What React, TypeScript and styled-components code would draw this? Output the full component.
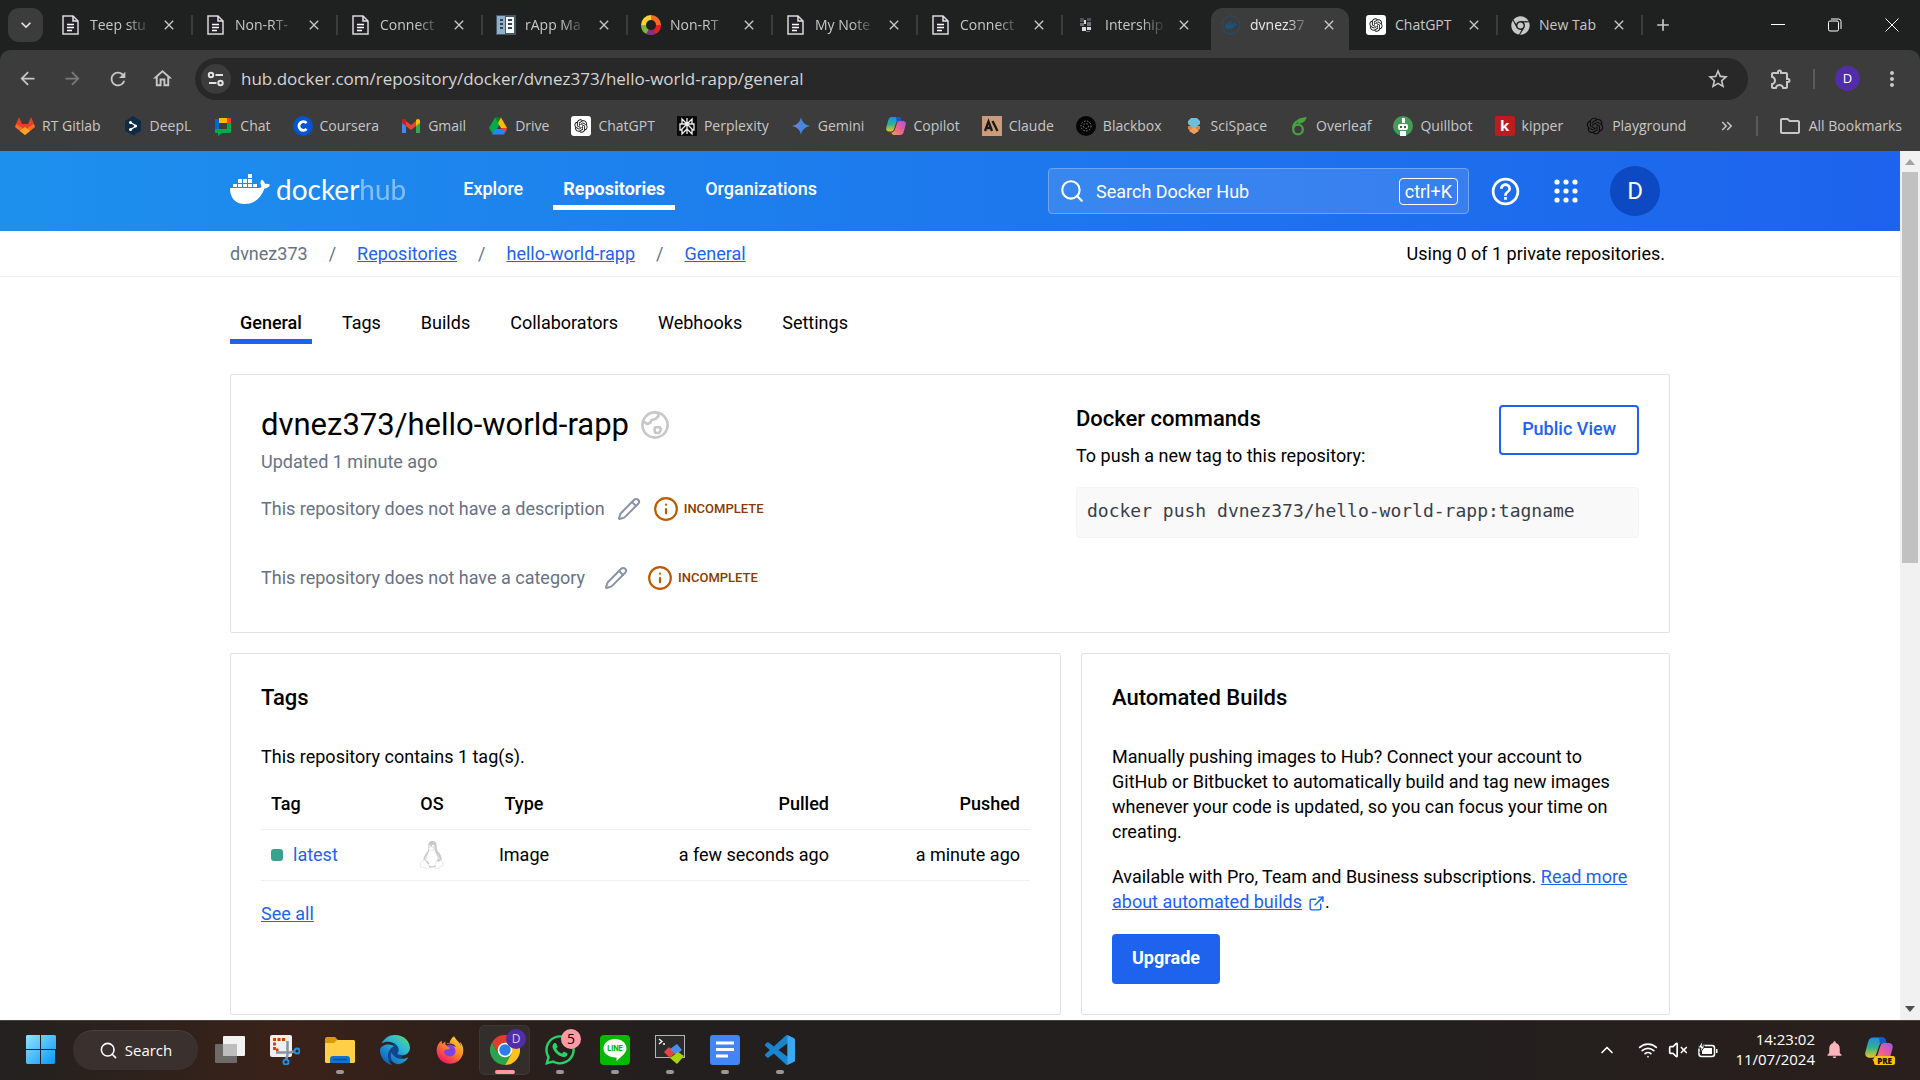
import React from "react";
import styled, { createGlobalStyle, css } from "styled-components";
import {
  MdArrowBack, MdArrowForward, MdRefresh, MdOutlineHome, MdStarBorder, MdMoreVert,
  MdOutlineFolder, MdOutlineExtension, MdAdd, MdClose, MdExpandMore, MdHelpOutline,
  MdKeyboardDoubleArrowRight, MdNotifications,
} from "react-icons/md";
import { FaLinux, FaWhatsapp, FaChrome, FaDocker } from "react-icons/fa";
import { FaEdge, FaFirefoxBrowser } from "react-icons/fa6";
import { RiOpenaiFill } from "react-icons/ri";
import { Info, Pencil, Search, ExternalLink, Wifi, VolumeX, ChevronUp } from "lucide-react";

const ui = `"Open Sans", "Noto Sans", sans-serif`;
const blue = "#1d63ed";

const Global = createGlobalStyle`
  *, *::before, *::after { box-sizing: border-box; }
  html, body { margin: 0; height: 100%; }
  body { font-family: Roboto, "Liberation Sans", sans-serif; font-size: 18px; line-height: 25px; color: #000; }
  #root { height: 100%; }
  button, input { font: inherit; color: inherit; border: 0; padding: 0; margin: 0; background: none; }
  button { cursor: pointer; }
  h1, h2, p { margin: 0; }
  a { color: ${blue}; }
  svg { display: block; flex: none; }
`;

const Screen = styled.div`
  display: grid;
  grid-template-rows: auto minmax(0, 1fr) auto;
  height: 100vh;
  overflow: hidden;
  background: #fff;
`;

/* ---------- browser frame ---------- */

const Chrome = styled.header`
  background: #1f2120;
  color: #c7c7c7;
  font-family: ${ui};
  font-size: 14px;
  line-height: 20px;
`;

const TabStrip = styled.div`
  display: flex;
  align-items: center;
  height: 50px;
  padding-left: 8px;
`;

const TabSearch = styled.button`
  display: grid;
  place-items: center;
  width: 35px;
  height: 34px;
  margin-right: 5px;
  border-radius: 11px;
  background: #3c3c3c;
  color: #e3e3e3;
`;

const Tab = styled.div<{ $active?: boolean; $bare?: boolean }>`
  position: relative;
  display: flex;
  align-items: center;
  flex: 0 1 145px;
  min-width: 0;
  height: 50px;
  padding: 0 6px 0 13px;
  isolation: isolate;
  ${p => !p.$bare && !p.$active && css`
    &::after {
      content: "";
      position: absolute;
      right: 0;
      top: 15px;
      width: 2px;
      height: 20px;
      background: #3c3c3c;
    }
  `}
  ${p => p.$active && css`
    color: #e8e8e8;
    &::before {
      content: "";
      position: absolute;
      z-index: -1;
      inset: 8px 4px 0 3px;
      border-radius: 12px 12px 0 0;
      background: #3c3c3c;
    }
  `}
`;

const TabTitle = styled.button`
  display: flex;
  align-items: center;
  flex: 1;
  gap: 9px;
  min-width: 0;
  text-align: left;
`;

const Fade = styled.span<{ $whole?: boolean }>`
  flex: 1;
  min-width: 0;
  overflow: hidden;
  white-space: nowrap;
  ${p => !p.$whole && "mask-image: linear-gradient(90deg, #000 60%, transparent);"}
`;

const IconButton = styled.button<{ $w?: number; $dim?: boolean }>`
  display: grid;
  place-items: center;
  flex: none;
  width: ${p => p.$w ?? 45}px;
  height: 40px;
  color: ${p => (p.$dim ? "#7a7a7a" : "#c7c7c7")};
`;

const WindowControls = styled.div`
  display: flex;
  margin-left: auto;
  color: #fff;
`;

const Toolbar = styled.div`
  display: flex;
  align-items: center;
  height: 51px;
  padding: 7px 6px 1px 5px;
  border-radius: 10px 10px 0 0;
  background: #3c3c3c;
`;

const Omnibox = styled.div`
  display: flex;
  align-items: center;
  flex: 1;
  height: 42px;
  margin: 0 10px;
  padding: 0 8px 0 6px;
  border-radius: 21px;
  background: #282828;
`;

const SiteInfo = styled.button`
  display: grid;
  place-items: center;
  width: 30px;
  height: 30px;
  margin-right: 10px;
  border-radius: 50%;
  background: #3c3c3c;
`;

const Url = styled.input`
  flex: 1;
  min-width: 0;
  height: 30px;
  font-size: 17px;
  color: #d4d4d4;
  outline: 0;
`;

const Divider = styled.span`
  width: 2px;
  height: 20px;
  background: #5a5a5a;
`;

const Account = styled.div`
  display: flex;
  align-items: center;
  gap: 20px;
  padding: 0 9px 0 10px;
`;

const Profile = styled.button`
  width: 25px;
  height: 25px;
  border-radius: 50%;
  background: #512da8;
  color: #fff;
  font-size: 13px;
  line-height: 25px;
`;

const Bookmarks = styled.nav`
  display: flex;
  align-items: center;
  height: 50px;
  padding: 0 18px 0 15px;
  background: #3c3c3c;
`;

const BookmarkList = styled.div`
  display: flex;
  gap: 22px;
`;

const Bookmark = styled.a`
  display: flex;
  align-items: center;
  gap: 7px;
  color: #c7c7c7;
  text-decoration: none;
  white-space: nowrap;
`;

const BookmarkTail = styled.div`
  display: flex;
  align-items: center;
  gap: 20px;
  margin-left: auto;
`;

/* ---------- page ---------- */

const Viewport = styled.div`
  display: flex;
  min-height: 0;
`;

const Page = styled.div`
  flex: 1;
  min-width: 0;
  overflow: hidden;
`;

const Container = styled.div`
  max-width: 1440px;
  margin: 0 auto;
`;

const HubHeader = styled.header`
  background: linear-gradient(90deg, #1d90ed, #1d63ed);
  color: #fff;
`;

const HubBar = styled(Container)`
  display: flex;
  align-items: center;
  height: 80px;
`;

const Logo = styled.a`
  display: flex;
  align-items: center;
  gap: 6px;
  margin-right: 47px;
  padding-bottom: 4px;
  color: #fff;
  font-family: Lato, sans-serif;
  font-size: 28px;
  line-height: 30px;
  text-decoration: none;
  span { opacity: 0.45; }
`;

const TabNav = styled.nav`
  display: flex;
  gap: 20px;
`;

const HubNav = styled(TabNav)`
  padding-bottom: 4px;
`;

const NavLink = styled.a<{ $active?: boolean; $light?: boolean }>`
  padding: 8px 10px 4px;
  border-bottom: 5px solid transparent;
  color: ${p => (p.$light ? "#fff" : "#000")};
  font-weight: ${p => (p.$active ? (p.$light ? 700 : 500) : p.$light ? 500 : 400)};
  text-decoration: none;
  ${p => p.$active && `border-color: ${p.$light ? "#fff" : blue};`}
`;

const SearchBox = styled.label`
  display: flex;
  align-items: center;
  gap: 11px;
  flex: 0 1 421px;
  height: 46px;
  margin-left: auto;
  padding: 0 10px;
  border: 1px solid #6fa5f5;
  border-radius: 4px;
  background: rgba(255, 255, 255, 0.12);
  input { flex: 1; min-width: 0; outline: 0; }
  input::placeholder { color: #fff; opacity: 1; }
  kbd {
    padding: 0 5px;
    border: 1px solid #fff;
    border-radius: 4px;
    font: inherit;
  }
`;

const HubActions = styled.div`
  display: flex;
  align-items: center;
  gap: 32px;
  margin: 0 10px 0 20px;
`;

const Avatar = styled.button`
  width: 50px;
  height: 50px;
  border-radius: 50%;
  background: #0c49c2;
  font-size: 24px;
`;

const Crumbs = styled.div`
  border-bottom: 1px solid #efeff2;
`;

const CrumbRow = styled(Container)`
  display: flex;
  justify-content: space-between;
  padding: 10px 5px 10px 0;
`;

const CrumbList = styled.nav`
  display: flex;
  gap: 21px;
  color: #677285;
`;

const Content = styled(Container).attrs({ as: "main" })`
  padding-top: 25px;
`;

const Grid = styled.div`
  display: grid;
  grid-template-columns: minmax(0, 831fr) minmax(0, 589fr);
  gap: 20px;
  margin-top: 30px;
`;

const Card = styled.section<{ $wide?: boolean }>`
  border: 1px solid #e1e2e6;
  border-radius: 2px;
  padding: 30px;
  ${p => p.$wide && css`
    grid-column: 1 / -1;
    display: flex;
    justify-content: space-between;
    padding-bottom: 20px;
  `}
`;

const Title = styled.h1`
  display: flex;
  align-items: center;
  gap: 12px;
  font-size: 31px;
  font-weight: 400;
  line-height: 40px;
`;

const Heading = styled.h2`
  font-size: 22px;
  font-weight: 500;
  line-height: 28px;
`;

const Muted = styled.p`
  padding-top: 4px;
  color: #677285;
`;

const Missing = styled.div<{ $gap: number }>`
  display: flex;
  align-items: center;
  gap: ${p => p.$gap}px;
  height: 69px;
  color: #677285;
`;

const EditButton = styled.button`
  color: #8b93a7;
`;

const Badge = styled.span`
  display: flex;
  align-items: center;
  gap: 5px;
  color: #8a3a00;
  font-size: 13px;
  font-weight: 500;
  svg { color: #c05a00; }
`;

const Commands = styled.div`
  flex: 0 1 563px;
`;

const CommandHead = styled.div`
  display: flex;
  align-items: flex-start;
  justify-content: space-between;
  p { margin-top: 10px; }
`;

const Button = styled.button<{ $solid?: boolean }>`
  height: 50px;
  padding: 0 ${p => (p.$solid ? 18 : 21)}px 3px;
  border: 2px solid ${blue};
  border-radius: 4px;
  background: ${p => (p.$solid ? blue : "#fff")};
  color: ${p => (p.$solid ? "#fff" : blue)};
  font-weight: ${p => (p.$solid ? 700 : 500)};
`;

const Code = styled.code`
  display: block;
  margin-top: 19px;
  padding: 10px 10px 14px;
  border: 1px solid #f3f4f4;
  border-radius: 4px;
  background: #f9f9fa;
  color: #393f49;
  font: 18px/25px "DejaVu Sans Mono", "Liberation Mono", monospace;
  white-space: nowrap;
`;

const CardBody = styled.div`
  padding-top: 32px;
  p + p { margin-top: 20px; }
  ${Button} { margin-top: 20px; }
`;

const TagTable = styled.table`
  width: 100%;
  margin: 9px 0 20px;
  border-collapse: collapse;
  table-layout: fixed;
  th, td {
    height: 51px;
    padding: 0 10px;
    border-bottom: 1px solid #efeff2;
    font-weight: 400;
    text-align: right;
  }
  th { font-weight: 500; }
  th:nth-child(1), td:nth-child(1) { width: 138px; text-align: left; }
  th:nth-child(2), td:nth-child(2) { width: 66px; text-align: center; }
  th:nth-child(3), td:nth-child(3) { width: 118px; text-align: center; }
  th:nth-child(5) { width: 191px; }
  td svg { margin: 0 auto; }
`;

const TagName = styled.a`
  display: flex;
  align-items: center;
  gap: 10px;
  text-decoration: none;
  &::before {
    content: "";
    width: 12px;
    height: 12px;
    border-radius: 3px;
    background: #3aa18e;
  }
`;

const ReadMore = styled.a`
  svg { display: inline-block; vertical-align: -4px; margin-left: 6px; }
`;

const Scrollbar = styled.div`
  display: flex;
  flex-direction: column;
  align-items: center;
  width: 20px;
  background: #f1f1f1;
  svg { margin: 7px 0; }
`;

const Thumb = styled.div`
  width: 16px;
  height: 45%;
  margin-bottom: auto;
  background: #c1c1c1;
`;

/* ---------- taskbar ---------- */

const Taskbar = styled.footer`
  display: flex;
  align-items: center;
  height: 60px;
  padding: 0 25px 2px 26px;
  border-top: 1px solid #44413f;
  background: linear-gradient(90deg, #23211f, #3a2219 15%, #2c1f1b 26%, #231f1e 34%, #231f1e 75%, #2a1f1c);
  color: #fff;
  font-family: ${ui};
  font-size: 15px;
  line-height: 20px;
`;

const TaskSearch = styled.button`
  display: flex;
  align-items: center;
  justify-content: center;
  gap: 7px;
  width: 125px;
  height: 40px;
  margin: 0 6px 0 17px;
  border-radius: 20px;
  background: #3a302d;
  border-top: 1px solid #4a403d;
`;

const Task = styled.button<{ $open?: boolean; $focus?: boolean }>`
  position: relative;
  display: grid;
  place-items: center;
  width: 51px;
  height: 50px;
  margin-right: 4px;
  border-radius: 6px;
  ${p => p.$focus && "background: #332d2c; box-shadow: inset 0 0 0 1px #3d3736;"}
  ${p => p.$open && css`
    &::after {
      content: "";
      position: absolute;
      bottom: 1px;
      width: ${p.$focus ? 20 : 8}px;
      height: 4px;
      border-radius: 2px;
      background: ${p.$focus ? "#ff99a4" : "#9b9796"};
    }
  `}
`;

const Count = styled.span<{ $purple?: boolean }>`
  position: absolute;
  top: 4px;
  right: 4px;
  width: 20px;
  height: 20px;
  border-radius: 50%;
  background: ${p => (p.$purple ? "#512da8" : "#ff99a4")};
  color: ${p => (p.$purple ? "#d9cdf5" : "#000")};
  font-size: ${p => (p.$purple ? 12 : 14)}px;
`;

const Tray = styled.div`
  display: flex;
  align-items: center;
  gap: 9px;
  margin-left: auto;
`;

const TrayGroup = styled.button`
  display: flex;
  align-items: center;
  gap: 10px;
  margin: 0 8px 0 12px;
`;

const Clock = styled.time`
  padding-bottom: 2px;
  text-align: right;
`;

/* ---------- drawings ---------- */

type S = { s?: number };

const DocIcon = () => (
  <svg width="20" height="20" viewBox="0 0 20 20">
    <path d="M2 1h10l5 5v13H2z" fill="#232127" stroke="#d8d8d8" strokeWidth="1.5" />
    <path d="M12 1v5h5" fill="none" stroke="#e8e8e8" strokeWidth="1.5" />
    <path d="M6 9.500h7M6 12.500h7M6 15.500h5" stroke="#fff" strokeWidth="1.7" />
  </svg>
);
const PanelsIcon = () => (
  <svg width="20" height="20" viewBox="0 0 20 20">
    <path fill="#45596b" d="M0 0h20v20H0z" /><path fill="#8fb0c6" d="M1 1h8v18H1z" /><path fill="#f4f6f8" d="M10 2h8v16h-8z" />
    <path d="M4 5h3M4 9h3M4 13h3M12 5h4M12 9h4M12 13h4" stroke="#33424f" strokeWidth="2" />
  </svg>
);
const RingIcon = () => (
  <svg width="20" height="20" viewBox="0 0 20 20" fill="none" strokeWidth="5">
    <path d="M10 2.500A7.500 7.500 0 0 0 2.500 10" stroke="#fbd32c" /><path d="M10 2.500A7.500 7.500 0 0 1 17.500 10" stroke="#f36c21" />
    <path d="M17.500 10A7.500 7.500 0 0 1 13 17" stroke="#e3202a" /><path d="M13 17a7.500 7.500 0 0 1-6.500-.2" stroke="#8a2c8e" />
    <path d="M6.500 16.800A7.500 7.500 0 0 1 2.500 10" stroke="#7fb538" />
  </svg>
);
const PixelIcon = () => (
  <svg width="20" height="20" viewBox="0 0 20 20">
    <path fill="#4b4f58" d="M4 3h4v4H4zM11 3h4v3h-4z" /><path fill="#ddd" d="M8 5h2v4H8zM6 12h4v4H6zM11 12h4v3h-4z" />
    <path fill="#6d7077" d="M4 8h4v3H4zM11 7h4v4h-4zM10 16h4v1h-4z" />
  </svg>
);
const DockerFav = () => (
  <svg width="20" height="20" viewBox="0 0 20 20">
    <circle cx="10" cy="10" r="9" fill="none" stroke="#1d567d" strokeWidth="1" strokeDasharray="3 1" />
    <FaDocker x="4" y="4" size={12} color="#17557f" />
  </svg>
);
const OpenAI = () => (
  <svg width="20" height="20" viewBox="0 0 20 20"><rect width="20" height="20" rx="3" fill="#fff" /><RiOpenaiFill x="2" y="2" size={16} color="#111" /></svg>
);
const Gitlab = () => (
  <svg width="20" height="20" viewBox="0 0 20 20">
    <path fill="#fc6d26" d="M10 19 0 11l1-3h18l1 3z" /><path fill="#e24329" d="m1 8 3-7 3 7h6l3-7 3 7-5 3-4 3-4-3z" /><path fill="#fca326" d="m10 19-5-4 5-4 5 4z" />
  </svg>
);
const DeepL = () => (
  <svg width="20" height="20" viewBox="0 0 20 20">
    <path fill="#0f2b46" d="m10 0 8 5v10l-6 3v2l-4-2-6-3V5z" /><path d="m7 6 6 4-6 4" fill="none" stroke="#fff" strokeWidth="1.3" />
    <g fill="#fff"><circle cx="7.500" cy="6.500" r="1.500" /><circle cx="12.500" cy="10" r="1.500" /><circle cx="7.500" cy="13.500" r="1.500" /></g>
  </svg>
);
const Chat = () => (
  <svg width="20" height="20" viewBox="0 0 20 20">
    <path fill="#00ac47" d="M2 6h4v7h8V6h4v10a1 1 0 0 1-1 1H9l-4 3v-3H2z" /><path fill="#0066da" d="M2 3h4v10H2z" />
    <path fill="#ffba00" d="M6 2h9v5H6z" /><path fill="#ea4335" d="M14 2h3a1 1 0 0 1 1 1v4h-4z" /><path fill="#3c3c3c" d="M6 7h8v6H6z" />
  </svg>
);
const Coursera = () => (
  <svg width="20" height="20" viewBox="0 0 20 20"><circle cx="10" cy="10" r="10" fill="#0056d2" /><path d="M13.500 7.200a4.300 4.300 0 1 0 0 5.600" fill="none" stroke="#fff" strokeWidth="2.800" /></svg>
);
const Gmail = () => (
  <svg width="20" height="20" viewBox="0 0 20 20">
    <path fill="#4285f4" d="M1 6l4 3v8H1z" /><path fill="#34a853" d="M15 9l4-3v11h-4z" /><path fill="#ea4335" d="m5 5 5 4 5-4v5l-5 4-5-4z" />
    <path fill="#c5221f" d="M1 5c0-2 2-3 4-1v6L1 7z" /><path fill="#fbbc04" d="M19 5c0-2-2-3-4-1v6l4-3z" />
  </svg>
);
const Drive = () => (
  <svg width="20" height="20" viewBox="0 0 20 20">
    <path fill="#00ac47" d="M7 1.500h3L13 7 5 18 1 12z" /><path fill="#00832d" d="M7 1.500h6L10 7z" /><path fill="#ffba00" d="M13 1.500 19 12h-6L10 7z" />
    <path fill="#2684fc" d="M4 18.500 7 13h12l-3 5.500z" /><path fill="#ea4335" d="M13 12h6l-2 4.500z" />
  </svg>
);
const Perplexity = () => (
  <svg width="20" height="20" viewBox="0 0 20 20"><rect width="20" height="20" rx="1" fill="#0a0a0a" />
    <path d="M10 2v16M5 3l5 5 5-5v5H5zM5 8H3v6h2M15 8h2v6h-2M10 8l-5 5v5l5-5 5 5v-5z" fill="none" stroke="#eee" strokeWidth="1.300" /></svg>
);
const Gemini = () => (
  <svg width="20" height="20" viewBox="0 0 20 20">
    <defs><linearGradient id="gem" x1="0" x2="1"><stop stopColor="#8d7bd0" /><stop offset=".5" stopColor="#4b84e0" /><stop offset="1" stopColor="#2f9bd8" /></linearGradient></defs>
    <path fill="url(#gem)" d="M10 1c.8 5 4 8.200 9 9-5 .8-8.200 4-9 9-.8-5-4-8.200-9-9 5-.8 8.200-4 9-9z" />
  </svg>
);
const Copilot = ({ s = 20 }: S) => (
  <svg width={s} height={s} viewBox="0 0 20 20">
    <defs>
      <linearGradient id={`ca${s}`} x1="0" y1="0" x2="0" y2="1"><stop stopColor="#1b8fe8" /><stop offset=".5" stopColor="#2fb28e" /><stop offset="1" stopColor="#f2c51c" /></linearGradient>
      <linearGradient id={`cb${s}`} x1="1" y1="0" x2="0" y2="1"><stop stopColor="#a554e8" /><stop offset=".5" stopColor="#ee5f8f" /><stop offset="1" stopColor="#fb9a56" /></linearGradient>
    </defs>
    <path fill={`url(#ca${s})`} d="M6 1h6.500c1.300 0 2 1 2.300 2l.5 2h-2.500c-1.500 0-2.300.8-2.800 2.300L8 13c-.6 1.700-1.500 2.500-3 2.500H3C.8 15.500-.3 14 .3 11.500l2-7.500C2.900 2 4 1 6 1z" />
    <path fill="#1757c8" d="M10 1h2.500c1.300 0 2 1 2.300 2l.5 2h-2.500c-1 0-1.600.4-2.100 1z" />
    <path fill={`url(#cb${s})`} d="M14 19H8c-1.500 0-2.300-1-2.700-2.500C7 16.500 8.500 15 9 13.300L11 7c.5-1.300 1.200-2 2.500-2H17c2 0 3.200 1.500 2.700 3.500L17.700 16c-.6 2-1.700 3-3.700 3z" />
  </svg>
);
const Claude = () => (
  <svg width="20" height="20" viewBox="0 0 20 20"><path fill="#cc9b7a" d="M0 0h20v20H0z" /><path d="M3 15 6.500 5.500 10 15M4.500 12h4M10.500 5 15.500 15" fill="none" stroke="#1a1a18" strokeWidth="2.300" /></svg>
);
const Blackbox = () => (
  <svg width="20" height="20" viewBox="0 0 20 20"><circle cx="10" cy="10" r="10" fill="#050505" />
    <g fill="none" stroke="#888" strokeDasharray="1.500 1.500"><circle cx="10" cy="10" r="5" /><circle cx="10" cy="10" r="2.500" /></g></svg>
);
const SciSpace = () => (
  <svg width="20" height="20" viewBox="0 0 20 20"><path fill="#e2843e" d="m4 13 6 5 6-5v-3H4z" /><path fill="#f3a05f" d="m5 15 5 3 5-3-5-4z" /><path fill="#6cc0da" d="m4 5 3-3h6l3 3v3l-4 3v1H8v-1L4 8z" /></svg>
);
const Overleaf = () => (
  <svg width="20" height="20" viewBox="0 0 20 20" fill="none" stroke="#47a141" strokeWidth="2.300"><circle cx="9" cy="13.500" r="4.800" /><path d="M4.300 12C4 8 8 3.500 16 2.500c-1 2.500-4 4-7 4" /></svg>
);
const Quillbot = () => (
  <svg width="20" height="20" viewBox="0 0 20 20"><circle cx="10" cy="10" r="10" fill="#469a57" /><rect x="5" y="8" width="10" height="6" rx="2" fill="#fff" />
    <path fill="#fff" d="M7 15h6v5H7zM9 2h3v5H9z" /><path fill="#2c6e3c" d="M7 10h2v2H7zM11 10h2v2h-2z" /></svg>
);
const KipperMark = styled.span`
  width: 20px;
  height: 20px;
  border-radius: 2px;
  background: #b91d1d;
  color: #fff;
  font-weight: 700;
  font-size: 15px;
  line-height: 18px;
  text-align: center;
`;

const Tune = () => (
  <svg width="18" height="16" viewBox="0 0 18 16" fill="none" stroke="#e3e3e3" strokeWidth="2"><circle cx="4" cy="4" r="2.200" /><path d="M8.500 4H16M2 12h7.500" /><circle cx="13.500" cy="12" r="2.200" /></svg>
);
const Minimise = () => <svg width="14" height="14" viewBox="0 0 14 14"><path d="M0 6.500h14" stroke="#fff" /></svg>;
const Restore = () => (
  <svg width="14" height="14" viewBox="0 0 14 14" fill="none" stroke="#fff"><rect x=".5" y="3" width="10" height="10" rx="1.500" /><path d="M3 1h7.500a2.500 2.500 0 0 1 2.500 2.500V11" /></svg>
);
const Cross = () => <svg width="14" height="14" viewBox="0 0 14 14"><path d="m.5.5 13 13m0-13-13 13" stroke="#fff" /></svg>;

const Whale = () => (
  <svg width="40" height="30" viewBox="0 0 40 30" fill="#fff">
    <path d="M18 0h4v4h-4zM8 5h4v4H8zM13 5h4v4h-4zM18 5h4v4h-4zM3 10h4v3H3zM8 10h4v3H8zM13 10h4v3h-4zM18 10h4v3h-4zM23 10h4v3h-4z" />
    <path d="M0 14h29c2.500 0 3-1 2-3-1-2-.5-4 1-5.500 2 1.500 2.700 3 3 4.500 2-.5 3.500-.2 5 .8-1 2.700-3 3.700-5.500 3.700C31 24 24 30 15 30 5 30 0 24 0 14z" />
  </svg>
);
const Dots = () => (
  <svg width="24" height="24" viewBox="0 0 24 24" fill="#fff">{[3, 12, 21].map(y => [3, 12, 21].map(x => <circle key={`${x}-${y}`} cx={x} cy={y} r="2.600" />))}</svg>
);
const Globe = () => (
  <svg width="28" height="28" viewBox="0 0 28 28" fill="none" stroke="#c8c8c8" strokeWidth="2.600" strokeLinejoin="round">
    <circle cx="14" cy="14" r="12.600" /><path d="M2 10.500 6.500 13l3-1.500 1-2.500 4-1 3-3L17 2" /><path d="m14 16.500 4.500-.5 1.500 2.500-2 3.500h-3.500l-1-2.500z" />
  </svg>
);
const WindowsLogo = () => (
  <svg width="30" height="30" viewBox="0 0 30 30">
    <defs><linearGradient id="win" x1="0" y1="0" x2="1" y2="1"><stop stopColor="#8fe3ff" /><stop offset="1" stopColor="#0a95f8" /></linearGradient></defs>
    <path fill="url(#win)" d="M1 0h13v14H0V1zM15 0h14l1 1v13H15zM0 15h14v14H1l-1-1zM15 15h14v13l-1 1H15z" />
  </svg>
);
const TaskView = () => (
  <svg width="30" height="30" viewBox="0 0 30 30"><rect x="8" y="1" width="22" height="20" rx="1" fill="#f2f2f2" /><rect y="9" width="22" height="19" rx="1" fill="#6d6b6a" /><path fill="#bdbdbd" d="M8 9h14v12H8z" /></svg>
);
const Snip = () => (
  <svg width="30" height="30" viewBox="0 0 30 30"><rect width="22" height="22" rx="2" fill="#eef0f2" /><path d="M15 4.500H4.500V15h4" fill="none" stroke="#d83b01" strokeWidth="2.800" strokeDasharray="3 1.500" />
    <path d="M17.500 6v14l-1.500 5M6 17.500h14l4-1" fill="none" stroke="#8a949e" strokeWidth="2.500" /><g fill="none" stroke="#1c93e0" strokeWidth="2"><circle cx="27" cy="16" r="2.500" /><circle cx="16" cy="27" r="2.500" /></g></svg>
);
const Explorer = () => (
  <svg width="30" height="30" viewBox="0 0 30 30"><path fill="#d99a07" d="M0 4a2 2 0 0 1 2-2h8l3 3v5H0z" /><path fill="#ffcf48" d="M0 8h9l3-3h17l1 1v21l-1 1H1l-1-1z" /><path fill="#1273cf" d="M5 28v-4a3 3 0 0 1 3-3h14a3 3 0 0 1 3 3v4z" /><path d="M8.500 24.500h13" stroke="#0b4f97" strokeWidth="1.500" /></svg>
);
const Edge = () => (
  <svg width="30" height="30" viewBox="0 0 30 30">
    <defs><linearGradient id="edge" x1="1" y1="0" x2=".2" y2="1"><stop stopColor="#64de5e" /><stop offset=".4" stopColor="#2bb7d9" /><stop offset="1" stopColor="#0b5fc0" /></linearGradient></defs>
    <circle cx="14" cy="18" r="9" fill="#12448c" /><FaEdge size={30} fill="url(#edge)" />
  </svg>
);
const Firefox = () => (
  <svg width="28" height="28" viewBox="0 0 28 28">
    <defs><linearGradient id="fox" x1="1" y1="0" x2=".3" y2="1"><stop stopColor="#ffe14a" /><stop offset=".5" stopColor="#ff8a1f" /><stop offset="1" stopColor="#f5156c" /></linearGradient></defs>
    <circle cx="14" cy="15" r="6.500" fill="#7a43e6" /><FaFirefoxBrowser size={28} fill="url(#fox)" />
  </svg>
);
const ChromeLogo = () => (
  <svg width="30" height="30" viewBox="0 0 30 30">
    <path fill="#e33b2e" d="M2 7.500A15 15 0 0 1 28 7.500H15L8.500 18.800z" /><path fill="#2ba24c" d="M2 7.500A15 15 0 0 0 15 30l6.500-11.200h-13z" /><path fill="#fcc31e" d="M28 7.500A15 15 0 0 1 15 30l6.500-11.200L15 7.500z" />
    <circle cx="15" cy="15" r="7.300" fill="#fff" /><circle cx="15" cy="15" r="5.700" fill="#2f7de9" />
  </svg>
);
const LineLogo = () => (
  <svg width="30" height="30" viewBox="0 0 30 30"><rect width="30" height="30" rx="4" fill="#06b800" /><path fill="#fff" d="M15 4c6.500 0 11.500 4.200 11.500 9.300 0 4.500-4.500 8-10 12.700V22.400C9 22.800 3.500 18.800 3.500 13.300 3.500 8.200 8.500 4 15 4z" />
    <text x="15" y="16" textAnchor="middle" fontFamily="Inter, sans-serif" fontWeight="800" fontSize="7" fill="#06b800">LINE</text></svg>
);
const Terminal = () => (
  <svg width="30" height="30" viewBox="0 0 30 30"><rect x=".5" y=".5" width="29" height="22" fill="#2b2b2b" stroke="#b5b5b5" /><path d="m4 4 3 2.500L4 9M8 9h2" fill="none" stroke="#fff" strokeWidth="1.300" />
    <path fill="#e8453c" d="m9 17 5-5 6 6-5 5z" /><path fill="#4a8df0" d="m15 14 7-5 5 6-6 5z" /><path fill="#a6d608" d="m15 23 8-6 6 4-7 8z" /></svg>
);
const DocsLogo = () => (
  <svg width="30" height="30" viewBox="0 0 30 30"><rect width="30" height="30" rx="3" fill="#4285f4" /><path d="M6 8h18M6 14.500h18M6 21h12" stroke="#fff" strokeWidth="3" /></svg>
);
const CodeLogo = () => (
  <svg width="30" height="30" viewBox="0 0 24 24">
    <path fill="#1a85cf" d="M23.150 2.587L18.210.210a1.494 1.494 0 0 0-1.705.290l-9.460 8.630-4.120-3.128a.999.999 0 0 0-1.276.057L.327 7.261A1 1 0 0 0 .326 8.740L3.899 12 .326 15.260a1 1 0 0 0 .001 1.479L1.650 17.940a.999.999 0 0 0 1.276.057l4.120-3.128 9.460 8.630a1.492 1.492 0 0 0 1.704.290l4.942-2.377A1.500 1.500 0 0 0 24 20.060V3.939a1.500 1.500 0 0 0-.850-1.352zm-5.146 14.861L10.826 12l7.178-5.448v10.896z" />
    <path fill="#39a9f2" d="m18 .2 5.200 2.400a1.500 1.500 0 0 1 .8 1.300v16.200a1.500 1.500 0 0 1-.8 1.300L18 23.800z" />
  </svg>
);
const Battery = () => (
  <svg width="20" height="18" viewBox="0 0 20 18" overflow="visible"><rect x="1" y="4.500" width="15.500" height="11" rx="2.500" fill="none" stroke="#fff" strokeWidth="1.500" /><path fill="#fff" d="M4 7h10v6H4zM18 8h1.500v4H18z" /><path fill="#fff" stroke="#26201e" d="M5-1 0 7h3l-1 5 5-7H4z" /></svg>
);
const PreBadge = styled.span`
  position: absolute;
  right: 0;
  bottom: 0;
  padding: 0 3px;
  border-radius: 2px;
  background: #fdc20b;
  color: #111;
  font-size: 8px;
  font-weight: 800;
  line-height: 9px;
`;
const CopilotButton = styled.button`
  position: relative;
  width: 30px;
  height: 30px;
  margin-left: 11px;
`;

/* ---------- data ---------- */

const tabs: { title: string; icon: React.ReactNode; active?: boolean; bare?: boolean; whole?: boolean }[] = [
  { title: "Teep stu", icon: <DocIcon /> },
  { title: "Non-RT-", icon: <DocIcon /> },
  { title: "Connect", icon: <DocIcon /> },
  { title: "rApp Ma", icon: <PanelsIcon /> },
  { title: "Non-RT", icon: <RingIcon /> },
  { title: "My Note", icon: <DocIcon /> },
  { title: "Connect", icon: <DocIcon /> },
  { title: "Intership", icon: <PixelIcon />, bare: true },
  { title: "dvnez37", icon: <DockerFav />, active: true },
  { title: "ChatGPT", icon: <OpenAI />, whole: true },
  { title: "New Tab", icon: <FaChrome size={19} />, whole: true },
];

const bookmarks: [string, React.ReactNode][] = [
  ["RT Gitlab", <Gitlab />], ["DeepL", <DeepL />], ["Chat", <Chat />], ["Coursera", <Coursera />], ["Gmail", <Gmail />],
  ["Drive", <Drive />], ["ChatGPT", <OpenAI />], ["Perplexity", <Perplexity />], ["Gemini", <Gemini />], ["Copilot", <Copilot />],
  ["Claude", <Claude />], ["Blackbox", <Blackbox />], ["SciSpace", <SciSpace />], ["Overleaf", <Overleaf />], ["Quillbot", <Quillbot />],
  ["kipper", <KipperMark>k</KipperMark>], ["Playground", <RiOpenaiFill size={20} color="#0d0d0d" />],
];

const Incomplete = () => <Badge><Info size={26} strokeWidth={2} />INCOMPLETE</Badge>;

export default function App() {
  return (
    <Screen>
      <Global />
      <Chrome>
        <TabStrip>
          <TabSearch aria-label="Search tabs"><MdExpandMore size={20} /></TabSearch>
          {tabs.map((t, i) => (
            <Tab key={i} $active={t.active} $bare={t.bare}>
              <TabTitle>{t.icon}<Fade $whole={t.whole}>{t.title}</Fade></TabTitle>
              <IconButton $w={36} aria-label="Close tab"><MdClose size={16} /></IconButton>
            </Tab>
          ))}
          <IconButton $w={40} aria-label="New tab"><MdAdd size={20} /></IconButton>
          <WindowControls>
            <IconButton $w={57} aria-label="Minimise"><Minimise /></IconButton>
            <IconButton $w={57} aria-label="Restore"><Restore /></IconButton>
            <IconButton $w={57} aria-label="Close"><Cross /></IconButton>
          </WindowControls>
        </TabStrip>
        <Toolbar>
          <IconButton aria-label="Back"><MdArrowBack size={21} /></IconButton>
          <IconButton $dim aria-label="Forward"><MdArrowForward size={21} /></IconButton>
          <IconButton aria-label="Reload"><MdRefresh size={22} /></IconButton>
          <IconButton aria-label="Home"><MdOutlineHome size={23} /></IconButton>
          <Omnibox>
            <SiteInfo aria-label="Site information"><Tune /></SiteInfo>
            <Url aria-label="Address" defaultValue="hub.docker.com/repository/docker/dvnez373/hello-world-rapp/general" />
            <IconButton aria-label="Bookmark this page"><MdStarBorder size={24} /></IconButton>
          </Omnibox>
          <IconButton aria-label="Extensions"><MdOutlineExtension size={24} /></IconButton>
          <Account>
            <Divider />
            <Profile aria-label="Profile">D</Profile>
          </Account>
          <IconButton aria-label="Menu"><MdMoreVert size={24} /></IconButton>
        </Toolbar>
        <Bookmarks aria-label="Bookmarks">
          <BookmarkList>
            {bookmarks.map(([name, icon]) => <Bookmark key={name} href="#">{icon}{name}</Bookmark>)}
          </BookmarkList>
          <BookmarkTail>
            <MdKeyboardDoubleArrowRight size={18} />
            <Divider />
            <Bookmark href="#"><MdOutlineFolder size={24} />All Bookmarks</Bookmark>
          </BookmarkTail>
        </Bookmarks>
      </Chrome>

      <Viewport>
        <Page>
          <HubHeader>
            <HubBar>
              <Logo href="#"><Whale /><div>docker<span>hub</span></div></Logo>
              <HubNav>
                <NavLink $light href="#">Explore</NavLink>
                <NavLink $light $active href="#">Repositories</NavLink>
                <NavLink $light href="#">Organizations</NavLink>
              </HubNav>
              <SearchBox>
                <Search size={26} strokeWidth={2} />
                <input placeholder="Search Docker Hub" aria-label="Search Docker Hub" />
                <kbd>ctrl+K</kbd>
              </SearchBox>
              <HubActions>
                <button aria-label="Help"><MdHelpOutline size={33} /></button>
                <button aria-label="Apps"><Dots /></button>
                <Avatar aria-label="Account">D</Avatar>
              </HubActions>
            </HubBar>
          </HubHeader>
          <Crumbs>
            <CrumbRow>
              <CrumbList aria-label="Breadcrumb">
                <span>dvnez373</span><span>/</span><a href="#">Repositories</a><span>/</span><a href="#">hello-world-rapp</a><span>/</span><a href="#">General</a>
              </CrumbList>
              <span>Using 0 of 1 private repositories.</span>
            </CrumbRow>
          </Crumbs>
          <Content>
            <TabNav aria-label="Repository">
              <NavLink $active href="#">General</NavLink>
              {["Tags", "Builds", "Collaborators", "Webhooks", "Settings"].map(t => <NavLink key={t} href="#">{t}</NavLink>)}
            </TabNav>
            <Grid>
              <Card $wide>
                <div>
                  <Title>dvnez373/hello-world-rapp <Globe /></Title>
                  <Muted>Updated 1 minute ago</Muted>
                  <div>
                    <Missing $gap={12}>This repository does not have a description
                      <EditButton aria-label="Edit description"><Pencil size={24} strokeWidth={2} /></EditButton><Incomplete /></Missing>
                    <Missing $gap={19}>This repository does not have a category
                      <EditButton aria-label="Edit category"><Pencil size={24} strokeWidth={2} /></EditButton><Incomplete /></Missing>
                  </div>
                </div>
                <Commands>
                  <CommandHead>
                    <div>
                      <Heading>Docker commands</Heading>
                      <p>To push a new tag to this repository:</p>
                    </div>
                    <Button>Public View</Button>
                  </CommandHead>
                  <Code>docker push dvnez373/hello-world-rapp:tagname</Code>
                </Commands>
              </Card>
              <Card>
                <Heading>Tags</Heading>
                <CardBody>
                  <p>This repository contains 1 tag(s).</p>
                  <TagTable>
                    <thead><tr><th>Tag</th><th>OS</th><th>Type</th><th>Pulled</th><th>Pushed</th></tr></thead>
                    <tbody><tr><td><TagName href="#">latest</TagName></td><td><FaLinux size={28} color="#c9c9c9" /></td><td>Image</td><td>a few seconds ago</td><td>a minute ago</td></tr></tbody>
                  </TagTable>
                  <a href="#">See all</a>
                </CardBody>
              </Card>
              <Card>
                <Heading>Automated Builds</Heading>
                <CardBody>
                  <p>Manually pushing images to Hub? Connect your account to GitHub or Bitbucket to automatically build and tag new images whenever your code is updated, so you can focus your time on creating.</p>
                  <p>Available with Pro, Team and Business subscriptions. <ReadMore href="#">Read more about automated builds<ExternalLink size={17} /></ReadMore>.</p>
                  <Button $solid>Upgrade</Button>
                </CardBody>
              </Card>
            </Grid>
          </Content>
        </Page>
        <Scrollbar aria-hidden>
          <svg width="10" height="7" viewBox="0 0 10 7"><path d="M5 1l5 6H0z" fill="#a3a3a3" /></svg>
          <Thumb />
          <svg width="10" height="7" viewBox="0 0 10 7"><path d="M5 6 0 0h10z" fill="#505050" /></svg>
        </Scrollbar>
      </Viewport>

      <Taskbar>
        <button aria-label="Start"><WindowsLogo /></button>
        <TaskSearch><Search size={19} />Search</TaskSearch>
        <Task aria-label="Task view"><TaskView /></Task>
        <Task aria-label="Snipping tool"><Snip /></Task>
        <Task $open aria-label="File explorer"><Explorer /></Task>
        <Task aria-label="Edge"><Edge /></Task>
        <Task aria-label="Firefox"><Firefox /></Task>
        <Task $open $focus aria-label="Chrome"><ChromeLogo /><Count $purple>D</Count></Task>
        <Task $open aria-label="WhatsApp"><FaWhatsapp size={34} color="#25d366" /><Count>5</Count></Task>
        <Task $open aria-label="LINE"><LineLogo /></Task>
        <Task $open aria-label="Terminal"><Terminal /></Task>
        <Task $open aria-label="Docs"><DocsLogo /></Task>
        <Task $open aria-label="Code"><CodeLogo /></Task>
        <Tray>
          <button aria-label="Hidden icons"><ChevronUp size={20} /></button>
          <TrayGroup aria-label="Network, sound and battery"><Wifi size={20} /><VolumeX size={20} strokeWidth={2} /><Battery /></TrayGroup>
          <Clock>14:23:02<br />11/07/2024</Clock>
          <button aria-label="Notifications"><MdNotifications size={21} color="#ffb3ba" /></button>
          <CopilotButton aria-label="Copilot"><Copilot s={28} /><PreBadge>PRE</PreBadge></CopilotButton>
        </Tray>
      </Taskbar>
    </Screen>
  );
}
